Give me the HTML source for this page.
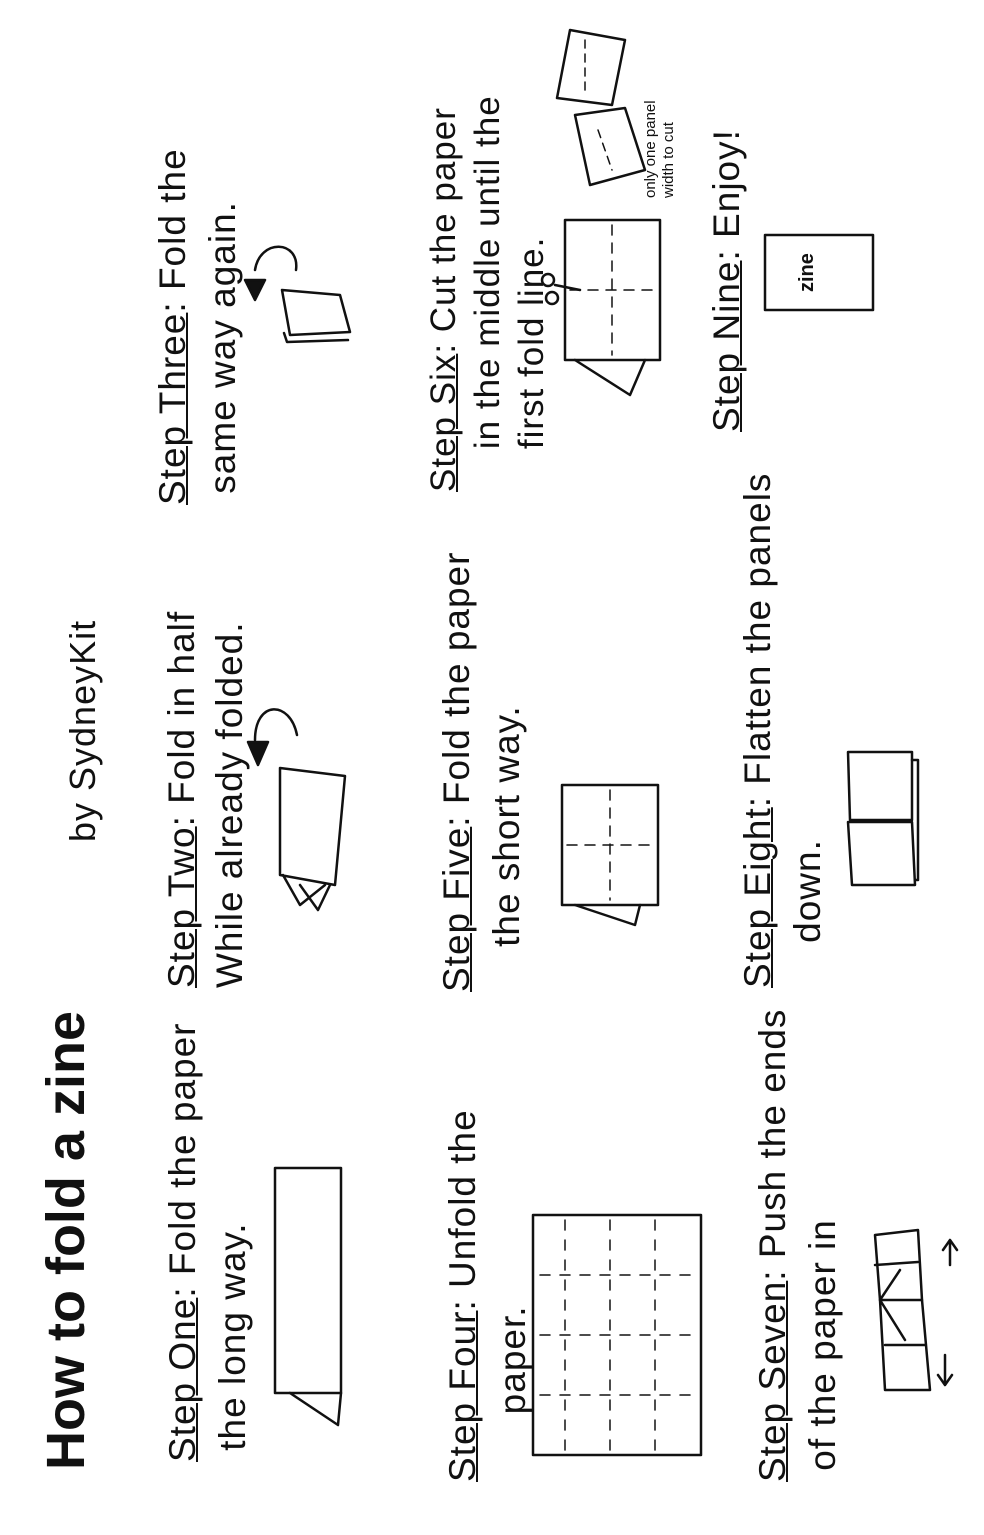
<!DOCTYPE html>
<html><head><meta charset="utf-8"><style>
html,body{margin:0;padding:0;background:#fff;}
body{width:984px;height:1535px;position:relative;overflow:hidden;font-family:"Liberation Sans",sans-serif;color:#111;}
.t{position:absolute;transform:rotate(-90deg);transform-origin:left top;white-space:nowrap;font-size:37px;line-height:50px;font-weight:400;letter-spacing:1px;}
.t u{text-decoration:underline;text-decoration-thickness:2px;}
svg{position:absolute;left:0;top:0;}
</style></head><body>
<svg width="984" height="1535" fill="none" stroke="#111" stroke-width="2.5" stroke-linecap="round" stroke-linejoin="round">
<rect x="275" y="1168" width="66" height="225"/>
<path d="M290 1393 L338 1425 L341 1393"/>
<path d="M280 768 L345 776 L335 885 L280 875 Z"/>
<path d="M283 875 L300 905 L325 885 M300 885 L318 910 L330 885"/>
<path d="M297 735 C290 700 255 700 255 740" />
<path d="M248 742 L258 765 L268 742 Z" fill="#111"/>
<path d="M282 290 L340 295 L350 332 L290 335 Z"/>
<path d="M284 333 L287 342 L348 340"/>
<path d="M296 270 C300 240 260 238 255 270"/>
<path d="M245 280 L255 300 L265 280 Z" fill="#111"/>
<rect x="533" y="1215" width="168" height="240"/>
<path d="M565 1220 V1450 M610 1220 V1450 M655 1220 V1450" stroke-dasharray="10 10" stroke-width="1.5"/>
<path d="M540 1275 H695 M540 1335 H695 M540 1395 H695" stroke-dasharray="10 10" stroke-width="1.5"/>
<rect x="562" y="785" width="96" height="120"/>
<path d="M610 790 V900 M567 845 H653" stroke-dasharray="10 8" stroke-width="1.5"/>
<path d="M575 905 L635 925 L640 905"/>
<rect x="565" y="220" width="95" height="140"/>
<path d="M612 225 V355 M570 290 H655" stroke-dasharray="10 8" stroke-width="1.5"/>
<path d="M575 360 L630 395 L645 360"/>
<circle cx="548" cy="280" r="6"/><circle cx="552" cy="298" r="6"/>
<path d="M555 285 L580 290"/>
<path d="M570 30 L625 40 L612 105 L557 98 Z"/>
<path d="M585 40 V95" stroke-dasharray="8 6" stroke-width="1.5"/>
<path d="M575 115 L625 108 L645 170 L590 185 Z"/>
<path d="M598 130 L612 170" stroke-dasharray="8 6" stroke-width="1.5"/>
<path d="M875 1235 L918 1230 L922 1300 L930 1390 L885 1390 L880 1300 Z"/>
<path d="M880 1300 L922 1300 M875 1265 L918 1262 M885 1345 L925 1345 M880 1300 L900 1270 M880 1300 L905 1340"/>
<path d="M950 1240 L950 1265 M943 1250 L950 1240 L957 1250"/>
<path d="M945 1355 L945 1385 M938 1375 L945 1385 L952 1375"/>
<path d="M848 752 L912 752 L912 820 L850 820 Z"/>
<path d="M848 822 L912 822 L915 885 L852 885 Z"/>
<path d="M912 760 L918 760 L918 880 L915 880"/>
<rect x="765" y="235" width="108" height="75"/>
</svg>

<div class="t" style="left:36px;top:1470px;font-size:54px;font-weight:700;line-height:60px;letter-spacing:0;">How to fold a zine</div>
<div class="t" style="left:58px;top:842px;font-size:36px;">by SydneyKit</div>

<div class="t" style="left:158px;top:1462px;"><u>Step One</u>: Fold the paper<br>&nbsp;the long way.</div>
<div class="t" style="left:158px;top:988px;line-height:48px;"><u>Step Two</u>: Fold in half<br>While already folded.</div>
<div class="t" style="left:148px;top:505px;"><u>Step Three</u>: Fold the<br>&nbsp;same way again.</div>

<div class="t" style="left:438px;top:1482px;"><u>Step Four</u>: Unfold the<br>&nbsp;&nbsp;&nbsp;&nbsp;&nbsp;&nbsp;paper.</div>
<div class="t" style="left:432px;top:992px;"><u>Step Five</u>: Fold the paper<br>&nbsp;&nbsp;&nbsp;&nbsp;the short way.</div>
<div class="t" style="left:422px;top:492px;line-height:44px;font-size:35px;"><u>Step Six</u>: Cut the paper<br>&nbsp;&nbsp;&nbsp;&nbsp;in the middle until the<br>&nbsp;&nbsp;&nbsp;&nbsp;first fold line.</div>

<div class="t" style="left:748px;top:1482px;"><u>Step Seven</u>: Push the ends<br>&nbsp;of the paper in</div>
<div class="t" style="left:733px;top:988px;"><u>Step Eight</u>: Flatten the panels<br>&nbsp;&nbsp;&nbsp;&nbsp;down.</div>
<div class="t" style="left:702px;top:432px;"><u>Step Nine</u>: Enjoy!</div>

<div class="t" style="left:795px;top:292px;font-size:20px;line-height:24px;font-weight:700;letter-spacing:0;">zine</div>
<div class="t" style="left:642px;top:198px;font-size:15px;line-height:18px;letter-spacing:0;">only one panel<br>width to cut</div>
</body></html>
